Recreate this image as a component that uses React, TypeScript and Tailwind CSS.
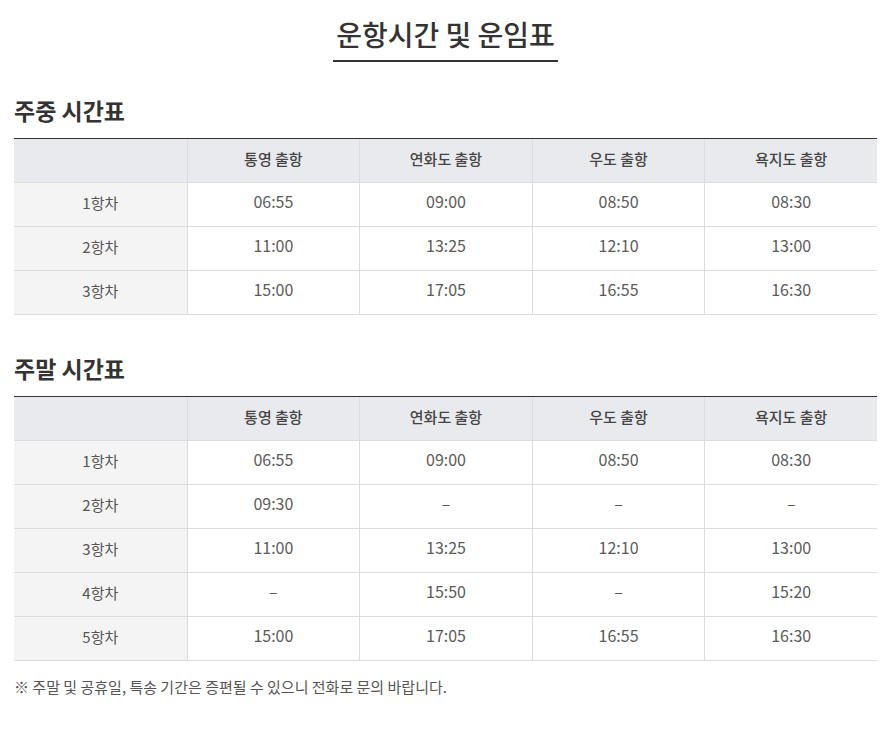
import React from "react";

const cols = ["통영 출항", "연화도 출항", "우도 출항", "욕지도 출항"];

const weekday: string[][] = [
  ["1항차", "06:55", "09:00", "08:50", "08:30"],
  ["2항차", "11:00", "13:25", "12:10", "13:00"],
  ["3항차", "15:00", "17:05", "16:55", "16:30"],
];

const weekend: string[][] = [
  ["1항차", "06:55", "09:00", "08:50", "08:30"],
  ["2항차", "09:30", "-", "-", "-"],
  ["3항차", "11:00", "13:25", "12:10", "13:00"],
  ["4항차", "-", "15:50", "-", "15:20"],
  ["5항차", "15:00", "17:05", "16:55", "16:30"],
];

function Table({ rows }: { rows: string[][] }) {
  return (
    <div className="border-t border-[#333]">
      <div className="grid grid-cols-5 h-[44px] border-b border-[#dcdcdc] bg-[#e9eaee]">
        <div />
        {cols.map((c) => (
          <div
            key={c}
            className="flex items-center justify-center border-l border-[#dcdcdc] pb-[2px] text-[15px] font-medium text-[#444]"
          >
            {c}
          </div>
        ))}
      </div>
      {rows.map((r, i) => (
        <div
          key={i}
          className="grid grid-cols-5 h-[44px] border-b border-[#dcdcdc]"
        >
          {r.map((v, j) => (
            <div
              key={j}
              className={
                j === 0
                  ? "flex items-center justify-center bg-[#f4f4f4] pb-[2px] text-[15px] text-[#555]"
                  : "flex items-center justify-center border-l border-[#dcdcdc] pb-[7px] text-[16px] text-[#5a5a5a]"
              }
            >
              {v === "-" ? "–" : v}
            </div>
          ))}
        </div>
      ))}
    </div>
  );
}

export default function App() {
  return (
    <div
      className="w-[893px] bg-white pl-[14px] pr-[16px] pt-[15px] pb-[30px]"
      style={{ fontFamily: '"Noto Sans CJK KR", "Noto Sans", sans-serif' }}
    >
      <div className="flex justify-center">
        <h1 className="inline-block border-b-2 border-[#333] px-[3px] pb-[7px] text-[28px] leading-[38px] font-medium text-[#333]">
          운항시간 및 운임표
        </h1>
      </div>
      <h2 className="mt-[32px] mb-[11px] text-[23px] leading-[33px] font-bold text-[#333]">
        주중 시간표
      </h2>
      <Table rows={weekday} />
      <h2 className="mt-[37px] mb-[11px] text-[23px] leading-[33px] font-bold text-[#333]">
        주말 시간표
      </h2>
      <Table rows={weekend} />
      <p className="mt-[14px] text-[15px] leading-[24px] text-[#555]">
        ※ 주말 및 공휴일, 특송 기간은 증편될 수 있으니 전화로 문의 바랍니다.
      </p>
    </div>
  );
}
